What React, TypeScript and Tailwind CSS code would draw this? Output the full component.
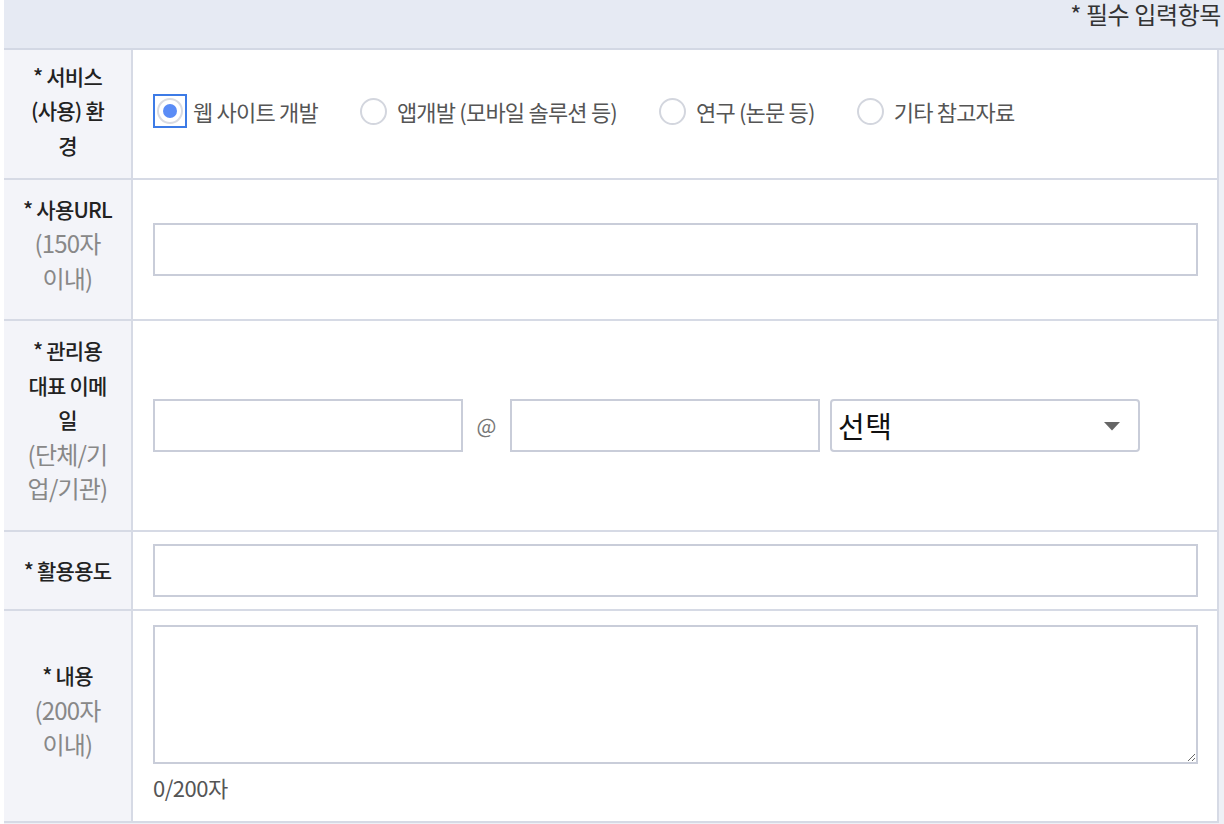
import React from "react";

const font = { fontFamily: '"Noto Sans CJK KR", "Noto Sans", sans-serif' };

function Radio({ checked, label }: { checked?: boolean; label: string }) {
  return (
    <label className="flex items-center">
      {checked ? (
        <span className="w-[34px] h-[34px] border-2 border-[#3d7be6] flex items-center justify-center">
          <span className="w-[26px] h-[26px] rounded-full border-2 border-[#d9dbe2] bg-white flex items-center justify-center">
            <span className="w-[14px] h-[14px] rounded-full bg-[#5a8cf6]" />
          </span>
        </span>
      ) : (
        <span className="w-[27px] h-[27px] rounded-full border-2 border-[#d3d6de] bg-white" />
      )}
      <span className={`${checked ? "ml-[6px]" : "ml-[10px]"} text-[22px] text-[#555] tracking-[-0.8px]`}>{label}</span>
    </label>
  );
}

function Label({ main, sub, shift }: { main: string[]; sub?: string[]; shift?: string }) {
  return (
    <div className={`w-[129px] shrink-0 bg-[#f3f4f9] border-r-2 border-[#d6dae5] flex flex-col items-center justify-center text-center leading-[34.5px] tracking-[-0.8px] ${shift ?? ""}`}>
      {main.map((l, i) => (
        <div key={"m" + i} className="text-[21px] font-medium text-[#222]">{l}</div>
      ))}
      {sub?.map((l, i) => (
        <div key={"s" + i} className="text-[24px] text-[#888]">{l}</div>
      ))}
    </div>
  );
}

export default function App() {
  return (
    <div className="w-[1224px] h-[824px] bg-white overflow-hidden" style={font}>
      <div className="ml-[4px] bg-[#eef0f6] h-full">
        <div className="h-[50px] bg-[#e6eaf3] border-b-2 border-[#d3d8e4] flex items-start justify-end pr-[3px] pt-[1px]">
          <span className="text-[24px] text-[#333] leading-[26px] tracking-[-0.4px]">* 필수 입력항목</span>
        </div>
        <div className="w-[1215px] border-r-2 border-[#d6dae5] bg-white">
          <div className="flex h-[130px] border-b-2 border-[#d6dae5]">
            <Label main={["* 서비스", "(사용) 환", "경"]} shift="pb-[7px]" />
            <div className="flex-1 flex items-center pl-[20px] pb-[6px] gap-[42px]">
              <Radio checked label="웹 사이트 개발" />
              <Radio label="앱개발 (모바일 솔루션 등)" />
              <Radio label="연구 (논문 등)" />
              <Radio label="기타 참고자료" />
            </div>
          </div>
          <div className="flex h-[141px] border-b-2 border-[#d6dae5]">
            <Label main={["* 사용URL"]} sub={["(150자", "이내)"]} shift="pb-[12px]" />
            <div className="flex-1 flex items-center pl-[20px] pr-[19px]">
              <input className="w-full h-[53px] border-2 border-[#c9cdd9] outline-none" />
            </div>
          </div>
          <div className="flex h-[211px] border-b-2 border-[#d6dae5]">
            <Label main={["* 관리용", "대표 이메", "일"]} sub={["(단체/기", "업/기관)"]} shift="pb-[12px]" />
            <div className="flex-1 flex items-center pl-[20px]">
              <input className="w-[310px] h-[53px] border-2 border-[#c9cdd9] outline-none" />
              <span className="w-[47px] text-center text-[21px] text-[#777]">@</span>
              <input className="w-[310px] h-[53px] border-2 border-[#c9cdd9] outline-none" />
              <div className="ml-[10px] w-[310px] h-[53px] border-2 border-[#c9cdd9] rounded-[4px] flex items-center justify-between pl-[6px] pr-[18px]">
                <span className="text-[29px] text-[#111] tracking-[0.5px]">선택</span>
                <svg width="16" height="10" viewBox="0 0 16 10">
                  <path d="M0 1 L16 1 L8 9.5 Z" fill="#666" />
                </svg>
              </div>
            </div>
          </div>
          <div className="flex h-[79px] border-b-2 border-[#d6dae5]">
            <Label main={["* 활용용도"]} />
            <div className="flex-1 flex items-center pl-[20px] pr-[19px]">
              <input className="w-full h-[53px] border-2 border-[#c9cdd9] outline-none" />
            </div>
          </div>
          <div className="flex h-[212px] border-b-2 border-[#d6dae5]">
            <Label main={["* 내용"]} sub={["(200자", "이내)"]} shift="pb-[12px]" />
            <div className="flex-1 flex flex-col pl-[20px] pr-[19px] pt-[14px]">
              <textarea className="w-full h-[139px] border-2 border-[#c9cdd9] outline-none resize-y" />
              <div className="mt-[7px] text-[22px] text-[#555] tracking-[-0.5px]">0/200자</div>
            </div>
          </div>
        </div>
      </div>
    </div>
  );
}
